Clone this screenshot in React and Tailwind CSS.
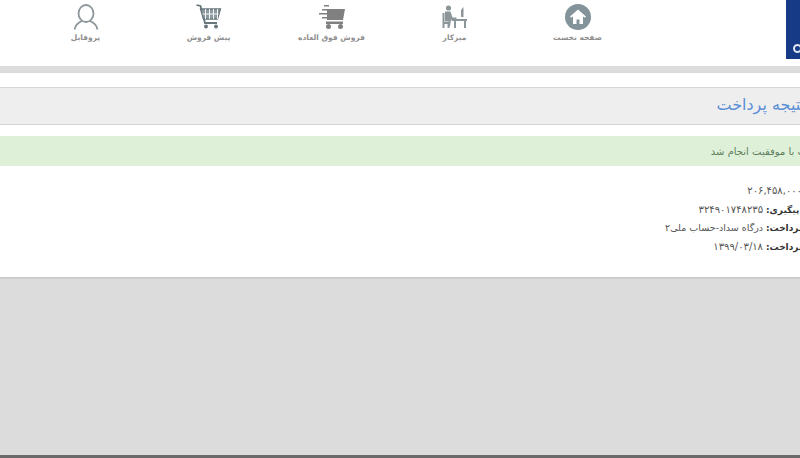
const navItems = [
  { label: "پروفایل", icon: "user" },
  { label: "پیش فروش", icon: "cart" },
  { label: "فروش فوق العاده", icon: "fast" },
  { label: "میزکار", icon: "desk" },
  { label: "صفحه نخست", icon: "home" },
];

const details = [
  { label: "مبلغ:", value: "۲۰۶,۴۵۸,۰۰۰", labelWidth: "w-[24px]", valueSize: "text-[10px]" },
  { label: "کد پیگیری:", value: "۳۲۴۹۰۱۷۴۸۲۳۵", labelWidth: "w-[63px]", valueSize: "text-[10px]" },
  { label: "نحوه پرداخت:", value: "درگاه سداد-حساب ملی۲", labelWidth: "w-[63px]", valueSize: "text-[9.5px]" },
  { label: "تاریخ پرداخت:", value: "۱۳۹۹/۰۳/۱۸", labelWidth: "w-[63px]", valueSize: "text-[10px]" },
];

const NavIcon = ({ name }) => {
  if (name === "user") {
    return (
      <svg width="26" height="26" viewBox="0 0 26 26" fill="none" stroke="#8c9599" strokeWidth="1.8">
        <ellipse cx="13" cy="9.5" rx="7.5" ry="8.5" />
        <path d="M1.5 25.5c1-5.500 5-7.500 7.500-8.500M24.500 25.500c-1-5.500-5-7.500-7.500-8.500" />
      </svg>
    );
  }
  if (name === "cart") {
    return (
      <svg width="26" height="25" viewBox="0 0 26 25" fill="none" stroke="#68767c" strokeWidth="1.3">
        <path d="M0.500 1l4 1 4.500 17h12" strokeWidth="1.800" />
        <path d="M4.500 5h20l-3 10H7.500z" fill="#8c9ba1" />
        <path d="M6.500 10h16M9.500 5v10M13.500 5v10M17.500 5v10M21.500 5v10" stroke="#fff" strokeWidth="0.900" />
        <circle cx="10" cy="22.500" r="2" fill="#68767c" stroke="none" />
        <circle cx="20" cy="22.500" r="2" fill="#68767c" stroke="none" />
      </svg>
    );
  }
  if (name === "fast") {
    return (
      <svg width="26" height="25" viewBox="0 0 26 25" fill="#808080">
        <path d="M8 5h18l-2 11H8z" />
        <path d="M7 17.500h17v2.500H7z" />
        <circle cx="9.500" cy="22.500" r="2.500" />
        <circle cx="21.500" cy="22.500" r="2.500" />
        <path d="M5 1h5v1.500H5zM3 5h5v1.500H3zM0 9h8v1.500H0zM3 13h5v1.500H3z" />
      </svg>
    );
  }
  if (name === "desk") {
    return (
      <svg width="25" height="24" viewBox="0 0 25 24" fill="#8c9599">
        <circle cx="6.500" cy="3" r="2.600" />
        <path d="M3 6.500h5.500l2 6h4v2h-5.500l-1 7H6.500v-5H3z" />
        <path d="M0.500 8h2v9h5v6H5.500v-4H2.500v4H0.500z" />
        <path d="M9.500 14h15.500v2h-1v7h-2v-7h-8v7h-2v-7H9.500z" />
        <path d="M19 5l2.500-3v10H19z" />
      </svg>
    );
  }
  return (
    <svg width="26" height="26" viewBox="0 0 26 26">
      <circle cx="13" cy="13" r="13" fill="#82939a" />
      <path d="M13 5.500L5 12.500l1.200 1.300L8 12.400V20h3.500v-4.500h3V20H18v-7.600l1.800 1.400 1.200-1.300z" fill="#fff" />
    </svg>
  );
};

export default function App() {
  return (
    <div className="h-[458px] w-[800px] overflow-hidden bg-[#dcdcdc] font-['DejaVu_Sans',sans-serif]">
      {/* header */}
      <div className="flex h-[66px] items-start bg-white">
        <div className="ml-[24px] flex">
          {navItems.map((item) => (
            <div key={item.label} className="flex h-[43px] w-[123px] flex-col items-center justify-between pt-[3px]">
              <div className="flex h-[27px] items-center">
                <NavIcon name={item.icon} />
              </div>
              <span dir="rtl" className="text-[7.5px] font-bold leading-[10px] text-[#8f8f8f]">{item.label}</span>
            </div>
          ))}
        </div>
        <div className="ml-auto flex h-[59px] w-[14px] items-end overflow-hidden bg-[#173a86] pb-[6px] pl-[7px]">
          <div className="h-[9px] w-[9px] shrink-0 rounded-full border-2 border-[#dfe6f2]" />
        </div>
      </div>
      <div className="h-[7px] bg-[#dcdcdc]" />

      {/* result card */}
      <div dir="rtl" className="-ml-[10px] -mr-[29px] h-[204px] bg-white pt-[14px] shadow-[0_1px_2px_rgba(0,0,0,0.15)]">
        <div className="flex h-[38px] items-center border-y border-[#d6d6d6] bg-[#eeeeee] pb-[2px] pr-[24px]">
          <h1 className="text-[16px] font-normal text-[#5b8fd6]">نتیجه پرداخت</h1>
        </div>
        <div className="mt-[11px] flex h-[30px] items-center bg-[#dff0d8] text-[10px] text-[#5c7d5c]">
          پرداخت با موفقیت انجام شد
        </div>
        <div className="mt-[16px] text-[10px] leading-[18.5px] text-[#555]">
          {details.map((row) => (
            <div key={row.label} className="flex">
              <div className={`flex shrink-0 justify-end whitespace-nowrap text-[9px] font-bold text-[#333] ${row.labelWidth}`}>
                {row.label}
              </div>
              <span className={`mr-[3px] ${row.valueSize}`}>{row.value}</span>
            </div>
          ))}
        </div>
      </div>

      {/* bottom */}
      <div className="mt-[178px] h-[3px] bg-[#6a6a6a]" />
    </div>
  );
}
